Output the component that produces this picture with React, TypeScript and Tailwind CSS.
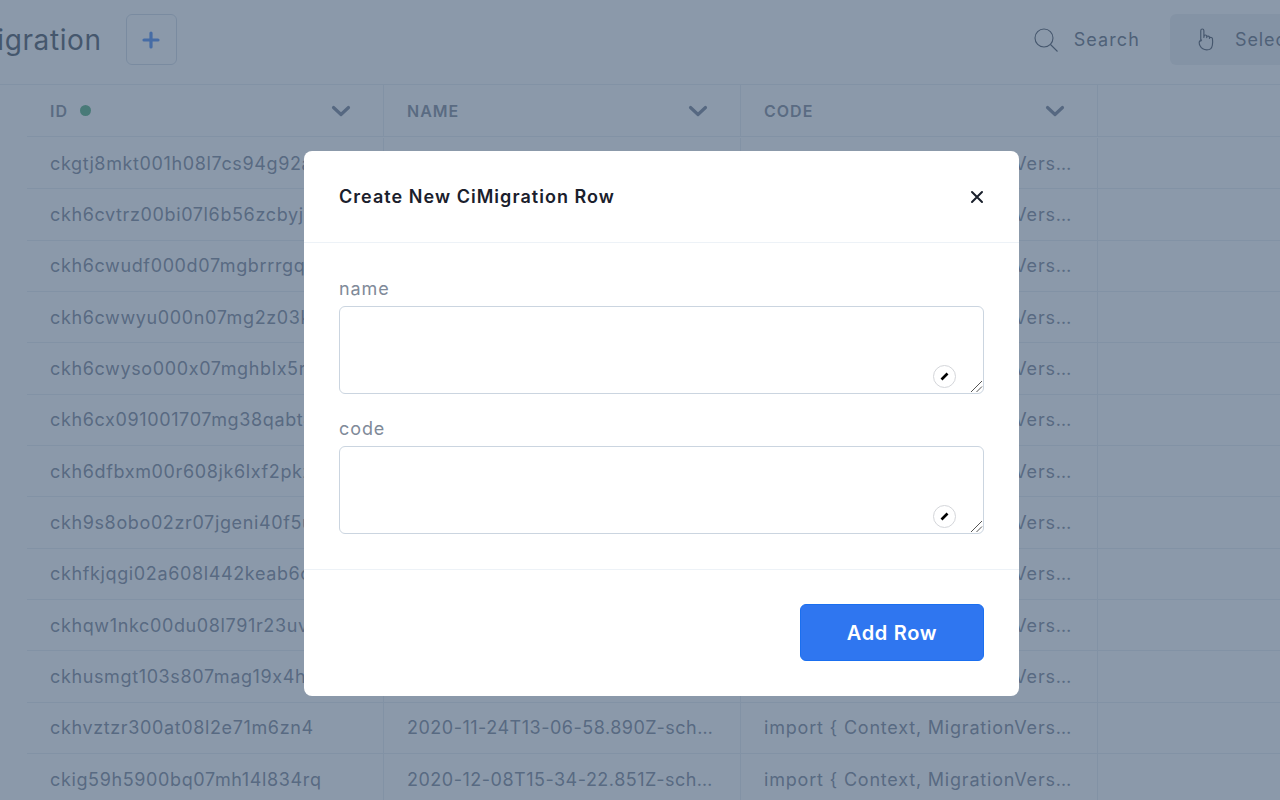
const rows = [
  ["ckgtj8mkt001h08l7cs94g92a", "2020-10-29T09-12-41.102Z-schema"],
  ["ckh6cvtrz00bi07l6b56zcbyj", "2020-11-08T14-22-10.331Z-schema"],
  ["ckh6cwudf000d07mgbrrrgq1x", "2020-11-08T14-23-02.114Z-schema"],
  ["ckh6cwwyu000n07mg2z03kd8p", "2020-11-08T14-23-05.720Z-schema"],
  ["ckh6cwyso000x07mghblx5r2e", "2020-11-08T14-23-08.046Z-schema"],
  ["ckh6cx091001707mg38qabt4m", "2020-11-08T14-23-10.893Z-schema"],
  ["ckh6dfbxm00r608jk6lxf2pkz", "2020-11-08T14-37-25.502Z-schema"],
  ["ckh9s8obo02zr07jgeni40f5u", "2020-11-10T23-55-31.240Z-schema"],
  ["ckhfkjqgi02a608l442keab6c", "2020-11-15T01-12-47.618Z-schema"],
  ["ckhqw1nkc00du08l791r23uvy", "2020-11-22T23-04-19.077Z-schema"],
  ["ckhusmgt103s807mag19x4hd0", "2020-11-24T13-01-33.415Z-schema"],
  ["ckhvztzr300at08l2e71m6zn4", "2020-11-24T13-06-58.890Z-schema"],
  ["ckig59h5900bq07mh14l834rq", "2020-12-08T15-34-22.851Z-schema"],
];

const code = "import { Context, MigrationVersion } from 'ci'";

function Chevron() {
  return (
    <svg width="20" height="12" viewBox="0 0 20 12" fill="none" className="shrink-0">
      <path d="M2.5 2.5 10 9.5l7.5-7" stroke="#5f6c84" strokeWidth="3.2" strokeLinecap="round" strokeLinejoin="round" />
    </svg>
  );
}

function HeadCell({ label, dot }: { label: string; dot?: boolean }) {
  return (
    <div className="w-[357px] shrink-0 h-full flex items-center justify-between pl-[23px] pr-[32px] border-r border-[#e2e8f0]">
      <div className="flex items-center gap-[12px]">
        <span className="text-[16px] font-semibold tracking-[1px] text-[#6b7486]">{label}</span>
        {dot && <span className="w-[11px] h-[11px] rounded-full bg-[#38a169]" />}
      </div>
      <Chevron />
    </div>
  );
}

function Cell({ text, tracking }: { text: string; tracking: string }) {
  return (
    <div className="w-[357px] shrink-0 h-full flex items-center pl-[23px] pr-[22px] border-r border-[#e2e8f0]">
      <span className={"truncate text-[18px] text-[#667085] " + tracking}>{text}</span>
    </div>
  );
}

function Field({ label }: { label: string }) {
  return (
    <div className="flex flex-col">
      <label className="text-[18px] leading-[26px] tracking-[0.9px] text-[#7f8a99] mb-[4px]">{label}</label>
      <div className="relative h-[88px]">
        <textarea className="block w-full h-full border border-[#cbd5e0] rounded-[6px] bg-white outline-none resize-none" />
        <div className="absolute right-[28px] bottom-[6px] w-[23px] h-[23px] rounded-full border-[1.5px] border-[#d4d6da] bg-white flex items-center justify-center">
          <svg width="11" height="11" viewBox="0 0 11 11">
            <path d="M2.5 8.5 8.5 2.5" stroke="#000" strokeWidth="2.6" />
          </svg>
        </div>
        <svg width="13" height="13" viewBox="0 0 13 13" fill="none" stroke="#555" strokeWidth="1" className="absolute right-[1px] bottom-[1px]">
          <path d="M1 12 12 1M6.5 12 12 6.5" />
        </svg>
      </div>
    </div>
  );
}

export default function App() {
  return (
    <div className="relative w-[1280px] h-[800px] overflow-hidden bg-white [font-family:Inter,sans-serif]">
      <header className="h-[85px] pb-[5px] flex items-center border-b border-[#e2e8f0]">
        <h1 className="-ml-[57px] text-[28px] tracking-[0.6px] text-[#2d3748]">CiMigration</h1>
        <button className="ml-[24px] w-[51px] h-[51px] rounded-[6px] border border-[#cbd5e0] flex items-center justify-center">
          <svg width="18" height="18" viewBox="0 0 18 18">
            <path d="M9 2v14M2 9h14" stroke="#2f76f0" strokeWidth="3.2" strokeLinecap="round" />
          </svg>
        </button>
        <div className="ml-auto -mr-[60px] flex items-center shrink-0">
          <div className="flex items-center gap-[16px] mr-[30px]">
            <svg width="24" height="24" viewBox="0 0 24 24" fill="none" stroke="#2d3748" strokeWidth="1.1">
              <circle cx="10" cy="10" r="9" />
              <path d="m16.5 16.5 7 7" />
            </svg>
            <span className="text-[18px] tracking-[1.1px] text-[#4a5568]">Search</span>
          </div>
          <div className="w-[170px] h-[51px] rounded-[6px] bg-[#eaecef] flex items-center gap-[19px] pl-[27px]">
            <svg width="19" height="24" viewBox="0 0 18 23" fill="none" stroke="#2d3748" strokeWidth="1.1" strokeLinejoin="round" strokeLinecap="round">
              <path d="M3.5 12.5V2.6C3.5 1.5 4.2 1 5 1s1.500.5 1.500 1.600V9l.3-1.700c.2-.8 2.200-.8 2.400.3v1.600l.3-1c.3-.8 2.100-.6 2.300.4v1.300l.4-.6c.5-.6 2.300-.3 2.500.9.300 2 .100 5-.1 6.300-.4 2.600-2.200 4.500-5.400 4.500-3.500 0-5.100-1.500-6.400-3.900-.6-1.100-.800-2.100-.800-3.200 0-1 .9-2.100 2.300-2.400Z" />
            </svg>
            <span className="text-[18px] tracking-[0.9px] text-[#4a5568]">Select</span>
          </div>
        </div>
      </header>

      <div className="ml-[27px]">
        <div className="h-[52px] flex border-b border-[#e2e8f0] w-[1253px]">
          <HeadCell label="ID" dot />
          <HeadCell label="NAME" />
          <HeadCell label="CODE" />
        </div>
        {rows.map((row, i) => (
          <div key={row[0]} className={i === 0 ? "h-[52.33px] pt-px flex border-b border-[#e2e8f0] w-[1253px]" : "h-[51.33px] flex border-b border-[#e2e8f0] w-[1253px]"}>
            <Cell text={row[0]} tracking="tracking-[0.63px]" />
            <Cell text={row[1]} tracking="tracking-[0.5px]" />
            <Cell text={code} tracking="tracking-[0.8px]" />
          </div>
        ))}
      </div>
      <div className="absolute left-0 top-0 w-full h-full bg-[#526780]/[.67] pl-[304px] pt-[151px]">
        <div className="w-[715px] h-[545px] bg-white rounded-[8px] flex flex-col">
          <div className="h-[92px] shrink-0 flex items-center justify-between px-[35px] border-b border-[#edf2f7]">
            <h2 className="text-[18px] font-semibold tracking-[1.04px] text-[#1a202c]">Create New CiMigration Row</h2>
            <svg width="14" height="14" viewBox="0 0 14 14">
              <path d="M2 2l10 10M12 2 2 12" stroke="#1a202c" strokeWidth="2" strokeLinecap="round" />
            </svg>
          </div>
          <div className="h-[327px] shrink-0 border-b border-[#edf2f7] px-[35px] pt-[33px] flex flex-col gap-[22px]">
            <Field label="name" />
            <Field label="code" />
          </div>
          <div className="flex-1 flex items-start justify-end pt-[34px] pr-[35px]">
            <button className="w-[184px] h-[57px] rounded-[6px] bg-[#2f76f0] border border-[#1a6ff0] text-white text-[20px] font-semibold tracking-[0.7px]">
              Add Row
            </button>
          </div>
        </div>
      </div>
    </div>
  );
}
